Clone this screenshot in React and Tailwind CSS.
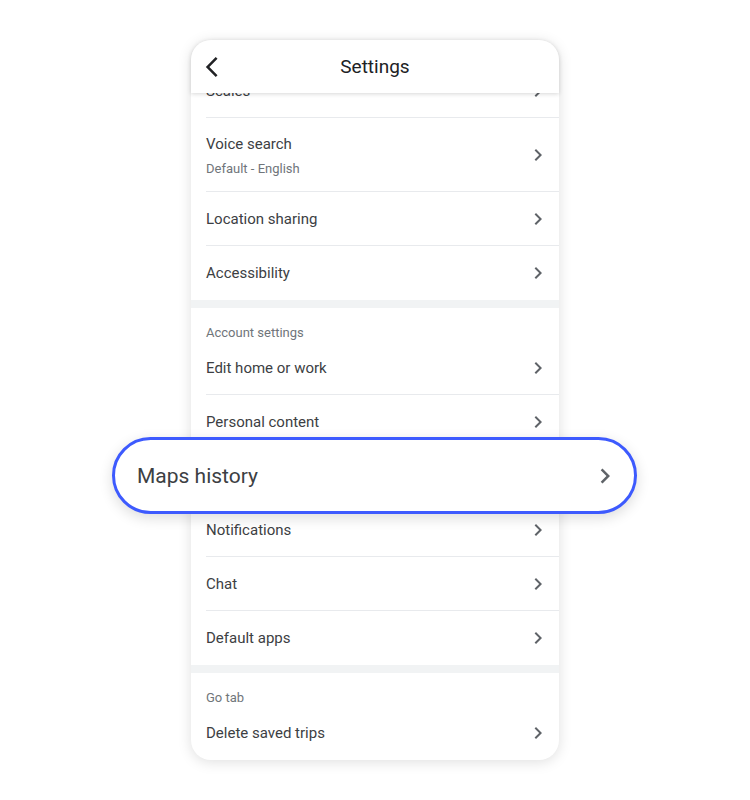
import React from "react"

const Chevron = ({ className }) => (
  <svg viewBox="0 0 24 24" className={className} fill="currentColor">
    <path d="M10 6L8.59 7.41 13.17 12l-4.58 4.59L10 18l6-6z" />
  </svg>
)

const Row = ({ title, subtitle, border = true }) => (
  <div className="flex items-stretch pl-[15px]">
    <div className={`flex flex-1 items-center justify-between pr-[9px] ${border ? "border-b border-[#e8eaed]" : ""} ${subtitle ? "h-[74px]" : "h-[54px]"}`}>
      <div className={`flex flex-col ${subtitle ? "pt-[2px]" : ""}`}>
        <span className="text-[15px] leading-5 text-[#3c4043]">{title}</span>
        {subtitle && <span className="mt-[7px] text-[13px] leading-4 text-[#70757a]">{subtitle}</span>}
      </div>
      <Chevron className="h-6 w-6 text-[#5f6368]" />
    </div>
  </div>
)

const Section = ({ title }) => (
  <div className="flex h-[33px] items-end pl-[15px]">
    <span className="text-[13px] leading-4 text-[#70757a]">{title}</span>
  </div>
)

const Divider = () => <div className="h-2 bg-[#f1f3f4]" />

export default function App() {
  return (
    <div className="flex h-[800px] w-[750px] justify-center bg-white pt-10" style={{ fontFamily: "Roboto, 'Noto Sans', sans-serif" }}>
      <div className="flex h-[720px] w-[368px] flex-col rounded-[20px] bg-white shadow-[0_2px_14px_rgba(0,0,0,0.13)]">
        <div className="relative z-10 flex h-[54px] items-center rounded-t-[20px] bg-white pl-[9px] shadow-[0_1px_4px_rgba(0,0,0,0.16)]">
          <svg viewBox="0 0 24 24" className="h-6 w-6 text-[#202124]" fill="currentColor">
            <path d="M17.51 3.87L15.73 2.1 5.84 12l9.9 9.9 1.77-1.77L9.38 12l8.13-8.13z" />
          </svg>
          <span className="flex-1 pr-[33px] text-center text-[19px] leading-6 text-[#202124]">Settings</span>
        </div>
        <div className="flex-1 rounded-b-[20px]">
          <div className="h-[25px] overflow-hidden">
            <div className="-mt-[29px]">
              <Row title="Scales" />
            </div>
          </div>
          <Row title="Voice search" subtitle="Default - English" />
          <Row title="Location sharing" />
          <Row title="Accessibility" border={false} />
          <Divider />
          <Section title="Account settings" />
          <Row title="Edit home or work" />
          <Row title="Personal content" />
          <div className="relative">
            <Row title="Maps history" />
            <div className="absolute -left-[79px] -right-[78px] -top-[12px] -bottom-[11px] flex items-center justify-between rounded-full border-[3px] border-[#3d5afe] bg-white pl-[22px] pr-[14px] shadow-[0_4px_14px_rgba(0,0,0,0.14)]">
              <span className="text-[21px] leading-6 text-[#3c4043]">Maps history</span>
              <Chevron className="h-[30px] w-[30px] text-[#5f6368]" />
            </div>
          </div>
          <Row title="Notifications" />
          <Row title="Chat" />
          <Row title="Default apps" border={false} />
          <Divider />
          <Section title="Go tab" />
          <Row title="Delete saved trips" border={false} />
        </div>
      </div>
    </div>
  )
}
